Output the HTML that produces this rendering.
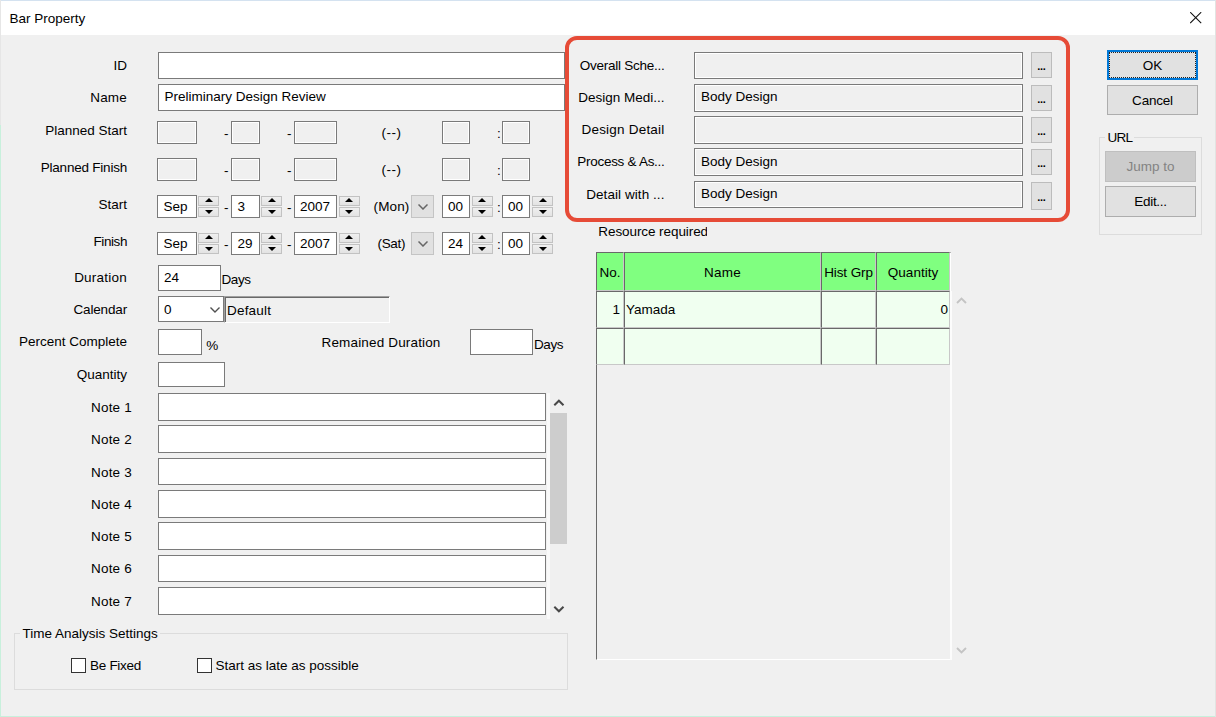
<!DOCTYPE html>
<html><head><meta charset="utf-8"><title>Bar Property</title>
<style>
*{box-sizing:border-box;margin:0;padding:0}
html,body{width:1216px;height:717px;overflow:hidden}
body{background:#f0f0f0;font-family:"Liberation Sans",sans-serif;font-size:13.5px;color:#000;position:relative;line-height:16px}
.a{position:absolute;white-space:nowrap}
.lbl{position:absolute;margin-top:1.2px;left:0;width:127px;text-align:right;white-space:nowrap;height:16px}
.inp{position:absolute;background:#fff;border:1px solid #7a7a7a;white-space:nowrap;overflow:hidden}
.dis{position:absolute;background:#f0f0f0;border:1px solid #7a7a7a;box-shadow:inset 0 0 0 1px #fff}
.ro{position:absolute;background:#f0f0f0;border:1px solid #7a7a7a;box-shadow:inset 0 0 0 1px #fff;white-space:nowrap;overflow:hidden}
.btn{position:absolute;background:#e1e1e1;border:1px solid #adadad;text-align:center;white-space:nowrap}
.sp{position:absolute;width:21px;height:23px}
.sp i{position:absolute;left:0;width:21px;height:10px;background:linear-gradient(#efefef,#e3e3e3);border:1px solid #c2c2c2}
.sp i:first-child{top:1px}.sp i:last-child{top:12px}
.sp i:first-child:after{content:"";position:absolute;left:5.5px;top:1.2px;border-left:4px solid transparent;border-right:4px solid transparent;border-bottom:4.5px solid #000}
.sp i:last-child:after{content:"";position:absolute;left:5.5px;top:2px;border-left:4px solid transparent;border-right:4px solid transparent;border-top:4.5px solid #000}
.rl{left:565px;width:99.5px;text-align:right}
.db{left:1031px;width:21px;height:26px;line-height:27.5px;font-size:11px;font-weight:bold;letter-spacing:-0.3px;border-color:#bcbcbc}
.c{position:absolute;background:#f0fff0;border-left:1px solid #696969;border-top:1px solid #696969;border-right:1px solid #c8c8c8;border-bottom:1px solid #c8c8c8;white-space:nowrap;overflow:hidden;line-height:36px}
.c.h{background:#80ff80;text-align:center;line-height:39.2px}
</style></head><body>
<!-- title bar -->
<div class="a" style="left:1px;top:1px;width:1214px;height:34px;background:#fff"></div>
<div class="a" style="left:9.5px;top:10.8px">Bar Property</div>
<svg class="a" style="left:1190px;top:12px" width="12" height="12" viewBox="0 0 12 12"><path d="M0.2 0.2L11.2 11.2M11.2 0.2L0.2 11.2" stroke="#111" stroke-width="1.1" fill="none"/></svg>
<!-- left labels -->
<div class="lbl" style="top:57px">ID</div>
<div class="lbl" style="top:89px;letter-spacing:0.2px">Name</div>
<div class="lbl" style="top:122px">Planned Start</div>
<div class="lbl" style="top:159px;letter-spacing:-0.22px">Planned Finish</div>
<div class="lbl" style="top:196px">Start</div>
<div class="lbl" style="top:233px;letter-spacing:-0.42px">Finish</div>
<div class="lbl" style="top:269px;letter-spacing:0.23px">Duration</div>
<div class="lbl" style="top:301px;letter-spacing:-0.16px">Calendar</div>
<div class="lbl" style="top:333px">Percent Complete</div>
<div class="lbl" style="top:366px">Quantity</div>
<div class="lbl" style="top:399px;width:132px;letter-spacing:0.2px">Note 1</div>
<div class="lbl" style="top:431px;width:132px;letter-spacing:0.2px">Note 2</div>
<div class="lbl" style="top:463.5px;width:132px;letter-spacing:0.2px">Note 3</div>
<div class="lbl" style="top:496px;width:132px;letter-spacing:0.2px">Note 4</div>
<div class="lbl" style="top:528px;width:132px;letter-spacing:0.2px">Note 5</div>
<div class="lbl" style="top:560px;width:132px;letter-spacing:0.2px">Note 6</div>
<div class="lbl" style="top:592.5px;width:132px;letter-spacing:0.2px">Note 7</div>
<!-- ID / Name -->
<div class="inp" style="left:158px;top:52px;width:407px;height:27px"></div>
<div class="inp" style="left:158px;top:84px;width:407px;height:27px;padding:4px 0 0 5.5px">Preliminary Design Review</div>
<!-- Planned Start -->
<div class="dis" style="left:157px;top:121px;width:40px;height:23px"></div>
<div class="a" style="left:224px;top:125.5px">-</div>
<div class="dis" style="left:231px;top:121px;width:29px;height:23px"></div>
<div class="a" style="left:287px;top:125.5px">-</div>
<div class="dis" style="left:294px;top:121px;width:43px;height:23px"></div>
<div class="a" style="left:381.5px;top:125px;letter-spacing:0.53px">(--)</div>
<div class="dis" style="left:442px;top:121px;width:28px;height:23px"></div>
<div class="a" style="left:497px;top:125.5px">:</div>
<div class="dis" style="left:502px;top:121px;width:28px;height:23px"></div>
<!-- Planned Finish -->
<div class="dis" style="left:157px;top:158px;width:40px;height:23px"></div>
<div class="a" style="left:224px;top:162.5px">-</div>
<div class="dis" style="left:231px;top:158px;width:29px;height:23px"></div>
<div class="a" style="left:287px;top:162.5px">-</div>
<div class="dis" style="left:294px;top:158px;width:43px;height:23px"></div>
<div class="a" style="left:381.5px;top:162px;letter-spacing:0.53px">(--)</div>
<div class="dis" style="left:442px;top:158px;width:28px;height:23px"></div>
<div class="a" style="left:497px;top:162.5px">:</div>
<div class="dis" style="left:502px;top:158px;width:28px;height:23px"></div>
<!-- Start -->
<div class="inp" style="left:157px;top:195px;width:40px;height:23px;padding:3px 0 0 5.5px">Sep</div>
<div class="sp" style="left:198px;top:195px"><i></i><i></i></div>
<div class="a" style="left:224px;top:200px">-</div>
<div class="inp" style="left:231px;top:195px;width:29px;height:23px;padding:3px 0 0 5.5px">3</div>
<div class="sp" style="left:261px;top:195px"><i></i><i></i></div>
<div class="a" style="left:287px;top:200px">-</div>
<div class="inp" style="left:294px;top:195px;width:43px;height:23px;padding:3px 0 0 5px">2007</div>
<div class="sp" style="left:338.5px;top:195px"><i></i><i></i></div>
<div class="a" style="left:373.5px;top:199px;letter-spacing:0.13px">(Mon)</div>
<div class="a" style="left:411px;top:195px;width:23px;height:23px;background:#e1e1e1;border:1px solid #c4c4c4"><svg class="a" style="left:6px;top:8px" width="10" height="6" viewBox="0 0 10 6"><path d="M0.5 0.5L5 5L9.5 0.5" stroke="#666" stroke-width="1.5" fill="none"/></svg></div>
<div class="inp" style="left:442px;top:195px;width:28px;height:23px;padding:3px 0 0 5px">00</div>
<div class="sp" style="left:471.5px;top:195px"><i></i><i></i></div>
<div class="a" style="left:497px;top:199.5px">:</div>
<div class="inp" style="left:502px;top:195px;width:28px;height:23px;padding:3px 0 0 5px">00</div>
<div class="sp" style="left:532px;top:195px"><i></i><i></i></div>
<!-- Finish -->
<div class="inp" style="left:157px;top:232px;width:40px;height:23px;padding:3px 0 0 5.5px">Sep</div>
<div class="sp" style="left:198px;top:232px"><i></i><i></i></div>
<div class="a" style="left:224px;top:237px">-</div>
<div class="inp" style="left:231px;top:232px;width:29px;height:23px;padding:3px 0 0 5.5px">29</div>
<div class="sp" style="left:261px;top:232px"><i></i><i></i></div>
<div class="a" style="left:287px;top:237px">-</div>
<div class="inp" style="left:294px;top:232px;width:43px;height:23px;padding:3px 0 0 5px">2007</div>
<div class="sp" style="left:338.5px;top:232px"><i></i><i></i></div>
<div class="a" style="left:377.5px;top:236px;letter-spacing:-0.33px">(Sat)</div>
<div class="a" style="left:411px;top:232px;width:23px;height:23px;background:#e1e1e1;border:1px solid #c4c4c4"><svg class="a" style="left:6px;top:8px" width="10" height="6" viewBox="0 0 10 6"><path d="M0.5 0.5L5 5L9.5 0.5" stroke="#666" stroke-width="1.5" fill="none"/></svg></div>
<div class="inp" style="left:442px;top:232px;width:28px;height:23px;padding:3px 0 0 5px">24</div>
<div class="sp" style="left:471.5px;top:232px"><i></i><i></i></div>
<div class="a" style="left:497px;top:236.5px">:</div>
<div class="inp" style="left:502px;top:232px;width:28px;height:23px;padding:3px 0 0 5px">00</div>
<div class="sp" style="left:532px;top:232px"><i></i><i></i></div>
<!-- Duration -->
<div class="inp" style="left:158px;top:265px;width:63px;height:26px;padding:4px 0 0 5px">24</div>
<div class="a" style="left:221.5px;top:272px;letter-spacing:-0.44px">Days</div>
<!-- Calendar -->
<div class="inp" style="left:158px;top:296px;width:65.5px;height:26px;padding:4.5px 0 0 5px">0<svg class="a" style="left:51px;top:10px" width="10" height="6" viewBox="0 0 10 6"><path d="M0.5 0.5L5 5L9.5 0.5" stroke="#505050" stroke-width="1.4" fill="none"/></svg></div>
<div class="a" style="left:224px;top:296px;width:166px;height:27px;background:#f0f0f0;border-top:1px solid #a0a0a0;border-left:1px solid #a0a0a0;border-right:1px solid #fff;border-bottom:1px solid #fff;box-shadow:inset 1px 1px 0 #696969;padding:6px 0 0 2px;letter-spacing:0.2px">Default</div>
<!-- Percent Complete -->
<div class="inp" style="left:158px;top:329px;width:44px;height:26px"></div>
<div class="a" style="left:206.3px;top:337.5px;letter-spacing:-0.5px">%</div>
<div class="a" style="left:321.5px;top:334.6px;letter-spacing:0.16px">Remained Duration</div>
<div class="inp" style="left:470px;top:329px;width:63px;height:26px"></div>
<div class="a" style="left:534px;top:337px;letter-spacing:-0.44px">Days</div>
<!-- Quantity -->
<div class="inp" style="left:158px;top:362px;width:66.5px;height:25px"></div>
<!-- Notes -->
<div class="inp" style="left:158px;top:393px;width:388px;height:28px"></div>
<div class="inp" style="left:158px;top:425px;width:388px;height:28px"></div>
<div class="inp" style="left:158px;top:458px;width:388px;height:27px"></div>
<div class="inp" style="left:158px;top:490px;width:388px;height:28px"></div>
<div class="inp" style="left:158px;top:522px;width:388px;height:28px"></div>
<div class="inp" style="left:158px;top:555px;width:388px;height:27px"></div>
<div class="inp" style="left:158px;top:587px;width:388px;height:28px"></div>
<!-- notes scrollbar -->
<div class="a" style="left:547px;top:393px;width:2.5px;height:226px;background:#f9f9f9"></div>
<svg class="a" style="left:553px;top:399px" width="12" height="8" viewBox="0 0 12 8"><path d="M1.3 6.3L5.9 1.7L10.5 6.3" stroke="#484848" stroke-width="2" fill="none"/></svg>
<div class="a" style="left:550px;top:412.5px;width:17px;height:131px;background:#cdcdcd"></div>
<svg class="a" style="left:553px;top:605px" width="12" height="8" viewBox="0 0 12 8"><path d="M1.3 1.7L5.9 6.3L10.5 1.7" stroke="#484848" stroke-width="2" fill="none"/></svg>
<!-- Time Analysis Settings -->
<div class="a" style="left:14px;top:633px;width:554px;height:57px;border:1px solid #dcdcdc"></div>
<div class="a" style="left:20px;top:626px;background:#f0f0f0;padding:0 2px 0 2.5px">Time Analysis Settings</div>
<div class="a" style="left:71px;top:658px;width:15px;height:15px;background:#fff;border:1px solid #333"></div>
<div class="a" style="left:90px;top:658px;letter-spacing:-0.29px">Be Fixed</div>
<div class="a" style="left:197px;top:658px;width:15px;height:15px;background:#fff;border:1px solid #333"></div>
<div class="a" style="left:215.5px;top:658px">Start as late as possible</div>
<!-- right property rows -->
<div class="a rl" style="top:57.8px;letter-spacing:-0.26px">Overall Sche...</div>
<div class="a rl" style="top:89.8px">Design Medi...</div>
<div class="a rl" style="top:122.3px;letter-spacing:0.21px">Design Detail</div>
<div class="a rl" style="top:154.3px;letter-spacing:-0.29px">Process &amp; As...</div>
<div class="a rl" style="top:186.8px;letter-spacing:0.07px">Detail with ...</div>
<div class="ro" style="left:694px;top:52px;width:329px;height:27px"></div>
<div class="ro" style="left:694px;top:84px;width:329px;height:28px;padding:4.2px 0 0 6px">Body Design</div>
<div class="ro" style="left:694px;top:116px;width:329px;height:28px"></div>
<div class="ro" style="left:694px;top:148px;width:329px;height:28px;padding:4.7px 0 0 6px">Body Design</div>
<div class="ro" style="left:694px;top:181px;width:329px;height:27px;padding:4.2px 0 0 6px">Body Design</div>
<div class="btn db" style="top:52px">...</div>
<div class="btn db" style="top:85px">...</div>
<div class="btn db" style="top:117px">...</div>
<div class="btn db" style="top:149px">...</div>
<div class="btn db" style="top:182px;height:28px;line-height:29px">...</div>
<!-- red highlight -->
<div class="a" style="left:565px;top:36px;width:505px;height:186px;border:4px solid #e64b37;border-radius:12px"></div>
<!-- buttons -->
<div class="btn" style="left:1107px;top:50px;width:91px;height:30px;border:2px solid #0078d7;padding-top:5.6px"><div class="a" style="left:0;top:0;right:0;bottom:0;border:1px dotted #222"></div>OK</div>
<div class="btn" style="left:1107px;top:85px;width:91px;height:30px;padding-top:6.6px;letter-spacing:-0.2px">Cancel</div>
<div class="a" style="left:1099px;top:137px;width:103px;height:98px;border:1px solid #dcdcdc"></div>
<div class="a" style="left:1105px;top:129.5px;background:#f0f0f0;padding:0 2px 0 2.5px;letter-spacing:-0.7px">URL</div>
<div class="btn" style="left:1105px;top:151px;width:91px;height:30.5px;background:#cccccc;border-color:#bfbfbf;color:#838383;padding-top:7px">Jump to</div>
<div class="btn" style="left:1105px;top:186px;width:91px;height:31px;padding-top:7.2px;letter-spacing:-0.3px">Edit...</div>
<!-- resource table -->
<div class="a" style="left:598.3px;top:224.2px;width:108.5px;letter-spacing:-0.08px;overflow:hidden">Resource required</div>
<div class="a" style="left:596px;top:252px;width:355px;height:408px;border-left:1px solid #696969;border-top:1px solid #696969;border-right:1px solid #fff;border-bottom:1px solid #fff"></div>
<div class="a" style="left:950px;top:291px;width:2px;height:369px;background:#fcfcfc"></div>
<div class="c h" style="left:596px;top:252px;width:28px;height:39px">No.</div>
<div class="c h" style="left:624px;top:252px;width:197px;height:39px;letter-spacing:0.2px">Name</div>
<div class="c h" style="left:821px;top:252px;width:55px;height:39px;letter-spacing:-0.11px">Hist Grp</div>
<div class="c h" style="left:876px;top:252px;width:74px;height:39px">Quantity</div>
<div class="c" style="left:596px;top:291px;width:28px;height:37px;text-align:right;padding-right:3px">1</div>
<div class="c" style="left:624px;top:291px;width:197px;height:37px;padding-left:1px">Yamada</div>
<div class="c" style="left:821px;top:291px;width:55px;height:37px"></div>
<div class="c" style="left:876px;top:291px;width:74px;height:37px;text-align:right;padding-right:1px">0</div>
<div class="c" style="left:596px;top:328px;width:28px;height:37px"></div>
<div class="c" style="left:624px;top:328px;width:197px;height:37px"></div>
<div class="c" style="left:821px;top:328px;width:55px;height:37px"></div>
<div class="c" style="left:876px;top:328px;width:74px;height:37px"></div>
<svg class="a" style="left:956px;top:297px" width="11" height="7" viewBox="0 0 11 7"><path d="M1 6L5.5 1.5L10 6" stroke="#c4c4c4" stroke-width="1.9" fill="none"/></svg>
<svg class="a" style="left:956px;top:646.5px" width="11" height="7" viewBox="0 0 11 7"><path d="M1 1L5.5 5.5L10 1" stroke="#c4c4c4" stroke-width="1.9" fill="none"/></svg>
<!-- window edges -->
<div class="a" style="left:0;top:0;width:1216px;height:1px;background:#d4e2f0"></div>
<div class="a" style="left:0;top:0;width:1px;height:125px;background:#e6e6e6"></div>
<div class="a" style="left:0;top:125px;width:1px;height:592px;background:#c8f0dc"></div>
<div class="a" style="left:0;top:716px;width:1216px;height:1px;background:#c8f0dc"></div>
<div class="a" style="left:1215px;top:0;width:1px;height:717px;background:#e2e4e2"></div>

</body></html>
